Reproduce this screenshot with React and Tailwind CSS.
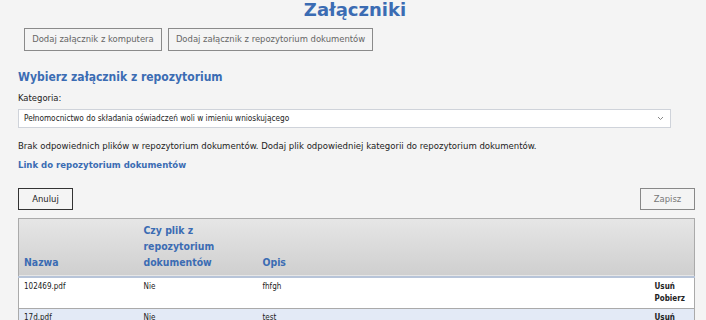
import React from 'react';

const rows = [
  { name: '102469.pdf', repo: 'Nie', desc: 'fhfgh', actions: ['Usuń', 'Pobierz'], bg: 'bg-white' },
  { name: '17d.pdf', repo: 'Nie', desc: 'test', actions: ['Usuń', 'Pobierz'], bg: 'bg-[#e3eaf6]' },
];

const App = () => {
  return (
    <div className="h-[320px] w-[706px] overflow-hidden bg-[#f4f4f4] font-['DejaVu_Sans_Condensed','DejaVu_Sans',sans-serif] text-[#222]">
      <h1 className="pl-[4px] text-center font-['DejaVu_Sans',sans-serif] text-[18px] font-bold leading-[20px] text-[#3b6cb3]">
        Załączniki
      </h1>

      <div className="mt-[8px] flex gap-[6px] pl-[24px]">
        <button className="h-[23px] w-[138px] border border-[#8a8a8a] text-[9.4px] text-[#666]">
          Dodaj załącznik z komputera
        </button>
        <button className="h-[23px] w-[205px] border border-[#8a8a8a] text-[9.4px] text-[#666]">
          Dodaj załącznik z repozytorium dokumentów
        </button>
      </div>

      <div className="px-[18px]">
        <h2 className="mt-[18px] text-[12px] font-bold leading-[16px] text-[#3b6cb3]">
          Wybierz załącznik z repozytorium
        </h2>
        <div className="mt-[6px] text-[9.4px] leading-[13px]">Kategoria:</div>
        <div className="mt-[5px] flex h-[19px] w-[653px] items-center justify-between border border-[#cfd3da] bg-white pl-[5px] pr-[6px]">
          <span className="text-[8.2px]">Pełnomocnictwo do składania oświadczeń woli w imieniu wnioskującego</span>
          <svg width="7" height="5" viewBox="0 0 7 5" className="text-[#888]">
            <path d="M1 1l2.5 2.5L6 1" fill="none" stroke="currentColor" strokeWidth="1" />
          </svg>
        </div>

        <p className="mt-[11px] text-[9.5px] leading-[13px]">
          Brak odpowiednich plików w repozytorium dokumentów. Dodaj plik odpowiedniej kategorii do repozytorium dokumentów.
        </p>
        <a className="mt-[6px] block text-[9.5px] font-bold leading-[13px] text-[#3b6cb3]">Link do repozytorium dokumentów</a>

        <div className="mt-[17px] flex w-[677px] justify-between">
          <button className="h-[22px] w-[55px] border border-[#333] text-[9.4px] text-[#222]">Anuluj</button>
          <button className="h-[22px] w-[55px] border border-[#888] text-[9.4px] text-[#777]">Zapisz</button>
        </div>

        <table className="mt-[8px] w-[677px] border-collapse border border-[#aaa] text-[8px]">
          <thead>
            <tr className="h-[58px] border-b-2 border-[#b7c4d8] bg-gradient-to-b from-[#e6e6e6] to-[#cfcfcf] text-left align-bottom text-[10.4px] font-bold leading-[16px] text-[#3b6cb3]">
              <th className="w-[120px] pb-[6px] pl-[5px]">Nazwa</th>
              <th className="w-[119px] pb-[6px] pl-[5px] pr-[10px]">Czy plik z repozytorium dokumentów</th>
              <th className="pb-[6px] pl-[5px]">Opis</th>
              <th className="w-[40px]"></th>
            </tr>
          </thead>
          <tbody>
            {rows.map((r) => (
              <tr key={r.name} className={`${r.bg} h-[32px] border-b border-[#aaa] align-top`}>
                <td className="pl-[5px] pt-[3px] leading-[12px]">{r.name}</td>
                <td className="pl-[5px] pt-[3px] leading-[12px]">{r.repo}</td>
                <td className="pl-[5px] pt-[3px] leading-[12px]">{r.desc}</td>
                <td className="pt-[3px] font-bold leading-[12px]">
                  {r.actions.map((a) => (
                    <div key={a}>{a}</div>
                  ))}
                </td>
              </tr>
            ))}
          </tbody>
        </table>
      </div>
    </div>
  );
};

export default App;
